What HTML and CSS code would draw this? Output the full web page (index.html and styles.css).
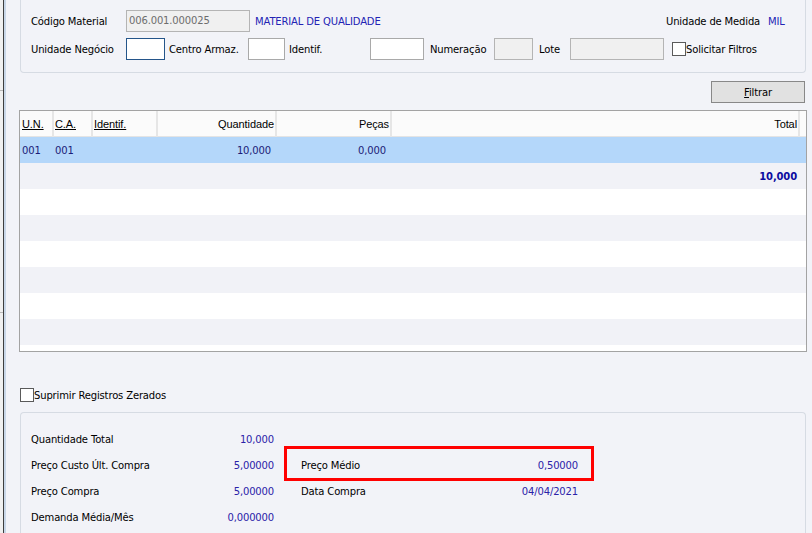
FILE: index.html
```html
<!DOCTYPE html>
<html lang="pt">
<head>
<meta charset="utf-8">
<title>Consulta Material</title>
<link rel="stylesheet" href="styles.css">
</head>
<body>
<div class="app">
  <div class="edge">
    <div class="edge-seg e1"></div>
    <div class="edge-seg e2"></div>
    <div class="edge-seg e3"></div>
  </div>
  <div class="edge-dark"></div>
  <div class="edge-blue"></div>
  <div class="main">
    <section class="group top-group">
      <div class="frow">
        <span class="lbl w95">Código Material</span>
        <span class="inp disabled w124">006.001.000025</span>
        <span class="blue ml5 grow">MATERIAL DE QUALIDADE</span>
        <span class="lbl w102">Unidade de Medida</span>
        <span class="blue w27">MIL</span>
      </div>
      <div class="frow">
        <span class="lbl w95">Unidade Negócio</span>
        <span class="inp focus w39"></span>
        <span class="lbl w79 ml4">Centro Armaz.</span>
        <span class="inp w37"></span>
        <span class="lbl w81 ml4">Identif.</span>
        <span class="inp w54"></span>
        <span class="lbl w64 ml6">Numeração</span>
        <span class="inp disabled w39"></span>
        <span class="lbl w31 ml6">Lote</span>
        <span class="inp disabled w94"></span>
        <span class="chk ml8"></span>
        <span class="lbl">Solicitar Filtros</span>
      </div>
    </section>

    <div class="btn-row">
      <button class="btn"><u>F</u>iltrar</button>
    </div>

    <div class="grid">
      <div class="grow-row head">
        <div class="hc"><u>U.N.</u></div>
        <div class="hc p1"><u>C.A.</u></div>
        <div class="hc p1"><u>Identif.</u></div>
        <div class="hc r">Quantidade</div>
        <div class="hc r">Peças</div>
        <div class="hc r">Total</div>
        <div class="hc last"></div>
      </div>
      <div class="grow-row sel">
        <div class="c">001</div>
        <div class="c p1">001</div>
        <div class="c"></div>
        <div class="c r">10,000</div>
        <div class="c r">0,000</div>
        <div class="c r"></div>
        <div class="c"></div>
      </div>
      <div class="grow-row alt">
        <div class="c"></div><div class="c"></div><div class="c"></div>
        <div class="c"></div><div class="c"></div>
        <div class="c r tot">10,000</div>
        <div class="c"></div>
      </div>
      <div class="grow-row"></div>
      <div class="grow-row alt"></div>
      <div class="grow-row"></div>
      <div class="grow-row alt"></div>
      <div class="grow-row"></div>
      <div class="grow-row alt"></div>
      <div class="grid-tail"></div>
    </div>

    <label class="sup-row">
      <span class="chk"></span>
      <span>Suprimir Registros Zerados</span>
    </label>

    <section class="group bottom-group">
      <div class="sum">
        <div class="sum-item"><span>Quantidade Total</span><span class="val">10,000</span></div>
        <div class="sum-item"></div>
        <div class="sum-item"><span>Preço Custo Últ. Compra</span><span class="val">5,00000</span></div>
        <div class="sum-item"><span>Preço Médio</span><span class="val">0,50000</span></div>
        <div class="sum-item"><span>Preço Compra</span><span class="val">5,00000</span></div>
        <div class="sum-item"><span>Data Compra</span><span class="val">04/04/2021</span></div>
        <div class="sum-item"><span>Demanda Média/Mês</span><span class="val">0,000000</span></div>
        <div class="sum-item"></div>
      </div>
      <div class="highlight"></div>
    </section>
  </div>
</div>
</body>
</html>
```

FILE: styles.css
```css
* { box-sizing: border-box; }

html, body {
  margin: 0;
  padding: 0;
  width: 812px;
  height: 533px;
  overflow: hidden;
  background: #f2f3f8;
}

body {
  font-family: "DejaVu Sans", sans-serif;
  font-size: 10px;
  letter-spacing: -0.15px;
  color: #000;
}

.app {
  display: flex;
  height: 533px;
}

.edge {
  width: 3px;
  display: flex;
  flex-direction: column;
  background: #f0f0f0;
}
.edge-seg.e1 { height: 90px; }
.edge-seg.e2 { height: 222px; border-top: 1px solid #b9b9b9; }
.edge-seg.e3 { flex: 1; border-top: 1px solid #b9b9b9; }

.edge-dark { width: 1px; background: #3d3d3d; }
.edge-blue { width: 2px; background: #c9d7e8; }

.main {
  flex: 1;
  display: flex;
  flex-direction: column;
  padding: 0 5px 0 13px;
  min-width: 0;
}

/* group boxes */
.group {
  border: 1px solid #d6dbe3;
  margin: 0 1px 0 1px;
}

.top-group {
  border-top: none;
  border-radius: 0 0 4px 4px;
  height: 73px;
  padding: 10px 10px 0 10px;
  display: flex;
  flex-direction: column;
  gap: 6px;
}

.frow {
  display: flex;
  align-items: center;
  height: 22px;
  white-space: nowrap;
}

.lbl { display: inline-block; }
.grow { flex: 1; }
.blue { color: #2323b4; }

.w95 { width: 95px; }
.w124 { width: 124px; }
.w102 { width: 102px; }
.w27 { width: 27px; }
.w39 { width: 39px; }
.w37 { width: 37px; }
.w54 { width: 54px; }
.w94 { width: 94px; }
.w79 { width: 79px; }
.w81 { width: 81px; }
.w64 { width: 64px; }
.w31 { width: 31px; }

.ml4 { margin-left: 4px; }
.ml5 { margin-left: 5px; }
.ml6 { margin-left: 6px; }
.ml8 { margin-left: 8px; }

.inp {
  display: inline-block;
  height: 22px;
  line-height: 20px;
  border: 1px solid #a9a9a9;
  background: #fff;
  padding: 0 2px;
  color: #6d6d6d;
}
.inp.disabled { background: #f0f0f0; border-color: #b4b4b4; }
.inp.focus { border-color: #24558a; }

.chk {
  display: inline-block;
  width: 14px;
  height: 14px;
  border: 1px solid #5a5a5a;
  background: #fff;
}

/* filter button */
.btn-row {
  display: flex;
  justify-content: flex-end;
  margin-top: 8px;
  padding-right: 2px;
}
.btn {
  width: 94px;
  height: 22px;
  background: #e1e1e1;
  border: 1px solid #888;
  font-family: "DejaVu Sans", sans-serif;
  font-size: 10px;
  letter-spacing: -0.15px;
  color: #000;
  padding: 0;
}

/* data grid */
.grid {
  margin-top: 7px;
  border: 1px solid #a3a3a3;
  height: 242px;
  background: #fff;
  display: flex;
  flex-direction: column;
}

.grow-row {
  display: grid;
  grid-template-columns: 34px 39px 65px 119px 115px 408px 6px;
  height: 26px;
  flex: none;
  background: #fff;
  color: #1c1c78;
}
.grow-row.alt { background: #f1f2f7; }
.grow-row.sel { background: #b4d7fa; }

.grow-row.head {
  background: #fbfbfb;
  color: #000;
  font-family: "Liberation Sans", sans-serif;
  font-size: 11px;
  letter-spacing: -0.1px;
  box-shadow: inset 0 -1px 0 #e4e4e4;
}

.hc {
  display: flex;
  align-items: center;
  padding: 0 1px 0 2px;
  border-right: 2px solid #e6e6e6;
}
.hc.p1 { padding-left: 1px; }
.hc.r { justify-content: flex-end; }
.hc.last { border-right: none; }

.c {
  display: flex;
  align-items: center;
  padding: 0 6px 0 2px;
  white-space: nowrap;
}
.c.p1 { padding-left: 1px; }
.c.r { justify-content: flex-end; }
.c.tot { font-weight: bold; color: #0b0ba0; padding-right: 3px; }

.grid-tail { flex: 1; }

/* suppress checkbox */
.sup-row {
  display: flex;
  align-items: center;
  margin: 36px 0 0 1px;
  height: 14px;
}

/* bottom summary */
.bottom-group {
  position: relative;
  margin-top: 10px;
  flex: 1;
  border-bottom: none;
  border-radius: 4px 4px 0 0;
  padding: 13px 10px 0 10px;
}

.sum {
  display: grid;
  grid-template-columns: 243px 277px;
  column-gap: 27px;
  grid-auto-rows: 26px;
}

.sum-item {
  display: flex;
  align-items: center;
  justify-content: space-between;
}
.sum-item .val { color: #2b22a8; }

.highlight {
  position: absolute;
  left: 263px;
  top: 33px;
  width: 310px;
  height: 35px;
  border: 3px solid #ff0000;
}
```
